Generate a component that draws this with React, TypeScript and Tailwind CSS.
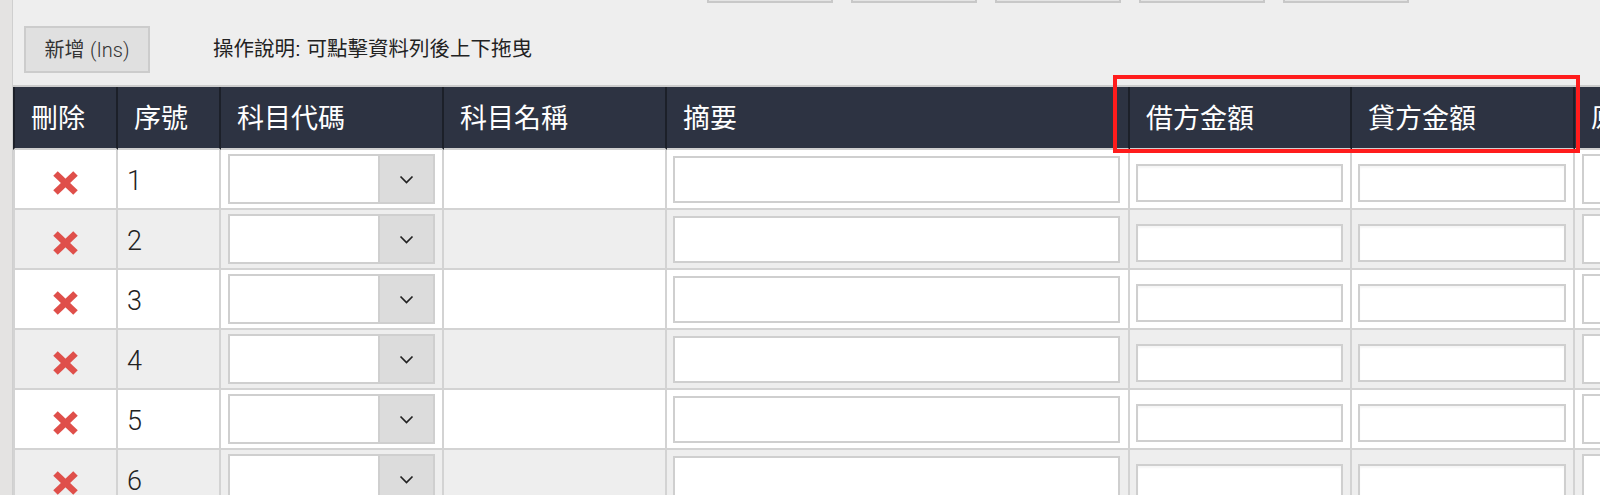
import React from 'react';

const headers = ['刪除', '序號', '科目代碼', '科目名稱', '摘要', '借方金額', '貸方金額', '原幣金額'];
const colWidths = ['w-[105px]', 'w-[103px]', 'w-[223px]', 'w-[223px]', 'w-[463px]', 'w-[222px]', 'w-[223px]', 'w-[225px]'];
const rows = [1, 2, 3, 4, 5, 6];

const DeleteIcon = () => (
  <svg width="27" height="26" viewBox="0 0 27 26">
    <line x1="3.5" y1="3.5" x2="23.5" y2="22.5" stroke="#df4f4a" strokeWidth="6.5" />
    <line x1="23.5" y1="3.5" x2="3.5" y2="22.5" stroke="#df4f4a" strokeWidth="6.5" />
  </svg>
);

const Chevron = () => (
  <svg width="15" height="9" viewBox="0 0 15 9">
    <polyline points="1.5,1.5 7.5,7.5 13.5,1.5" fill="none" stroke="#222" strokeWidth="1.7" />
  </svg>
);

export default function App() {
  return (
    <div
      className="relative w-[1600px] h-[495px] overflow-hidden bg-[#eeeeee] flex"
      style={{ fontFamily: '"Liberation Sans", "Noto Sans CJK TC", sans-serif' }}
    >
      {/* left strip */}
      <div className="w-[13px] shrink-0 bg-[#e4e3e2] border-r border-[#cfcfcf]" />

      <div className="flex-1 min-w-0 flex flex-col">
        {/* toolbar above, scrolled away */}
        <div className="h-[3px] shrink-0 overflow-hidden flex items-end gap-[18px] ml-[694px]">
          {[0, 1, 2, 3, 4].map((i) => (
            <div key={i} className="w-[126px] h-[30px] shrink-0 bg-[#e4e4e4] border-2 border-[#c8c8c8]" />
          ))}
        </div>

        <div className="shrink-0 flex items-center mt-[23px] ml-[11px]">
          <button className="w-[126px] h-[47px] bg-[#e0e0e0] border-2 border-[#cccccc] text-[20px] text-[#333]">
            新增 <span className="font-light" style={{ fontFamily: 'Roboto, sans-serif' }}>(Ins)</span>
          </button>
          <span className="ml-[63px] text-[20.5px] text-[#222]">操作說明: 可點擊資料列後上下拖曳</span>
        </div>

        <div className="shrink-0 mt-[12px] border-t-2 border-[#cccccc]">
          <table className="table-fixed border-separate border-spacing-0 w-[1787px]">
            <colgroup>
              {colWidths.map((w, i) => (
                <col key={i} className={w} />
              ))}
            </colgroup>
            <thead>
              <tr>
                {headers.map((h, i) => (
                  <th
                    key={h}
                    className={`h-[63px] p-0 pl-[16px] bg-[#2d3342] text-white text-left font-normal text-[27px] whitespace-nowrap overflow-hidden border-r-2 border-r-[#1c2029] border-b-2 border-b-[#d0d0d0] ${i === 0 ? 'border-l-2 border-l-[#1c2029]' : ''}`}
                    style={{ fontFamily: '"Noto Sans CJK TC", sans-serif' }}
                  >
                    {h}
                  </th>
                ))}
              </tr>
            </thead>
            <tbody>
              {rows.map((n, idx) => (
                <tr key={n} className={idx % 2 === 0 ? 'bg-white' : 'bg-[#eeeeee]'}>
                  <td className="h-[60px] p-0 border-l-2 border-r-2 border-b-2 border-[#d3d3d3]">
                    <div className="flex justify-center items-center pt-[8px]">
                      <DeleteIcon />
                    </div>
                  </td>
                  <td className="h-[60px] p-0 pl-[9px] pt-[4px] border-r-2 border-b-2 border-[#d3d3d3] text-[27px] font-light text-[#222]" style={{ fontFamily: 'Roboto, sans-serif' }}>
                    {n}
                  </td>
                  <td className="h-[60px] p-0 border-r-2 border-b-2 border-[#d3d3d3]">
                    <div className="mx-[7px] h-[50px] flex border-2 border-[#cfcfcf] bg-white">
                      <div className="flex-1" />
                      <div className="w-[55px] bg-[#dcdcdc] border-l-2 border-[#cfcfcf] flex items-center justify-center">
                        <Chevron />
                      </div>
                    </div>
                  </td>
                  <td className="h-[60px] p-0 border-r-2 border-b-2 border-[#d3d3d3]" />
                  <td className="h-[60px] p-0 border-r-2 border-b-2 border-[#d3d3d3]">
                    <div className="ml-[6px] mr-[8px] h-[47px] border-2 border-[#cfcfcf] bg-white" />
                  </td>
                  <td className="h-[60px] p-0 pt-[7px] border-r-2 border-b-2 border-[#d3d3d3]">
                    <div className="ml-[6px] mr-[7px] h-[38px] border-2 border-[#cfcfcf] bg-white shadow-[inset_0_2px_2px_rgba(0,0,0,0.04)]" />
                  </td>
                  <td className="h-[60px] p-0 pt-[7px] border-r-2 border-b-2 border-[#d3d3d3]">
                    <div className="ml-[6px] mr-[7px] h-[38px] border-2 border-[#cfcfcf] bg-white shadow-[inset_0_2px_2px_rgba(0,0,0,0.04)]" />
                  </td>
                  <td className="h-[60px] p-0 border-r-2 border-b-2 border-[#d3d3d3]">
                    <div className="ml-[7px] mr-[7px] h-[50px] border-2 border-[#cfcfcf] bg-white" />
                  </td>
                </tr>
              ))}
            </tbody>
          </table>
        </div>
      </div>

      {/* highlight box over the amount columns */}
      <div className="absolute left-[1113px] top-[75px] w-[467px] h-[78px] border-4 border-[#ff1c1c] pointer-events-none" />
    </div>
  );
}
